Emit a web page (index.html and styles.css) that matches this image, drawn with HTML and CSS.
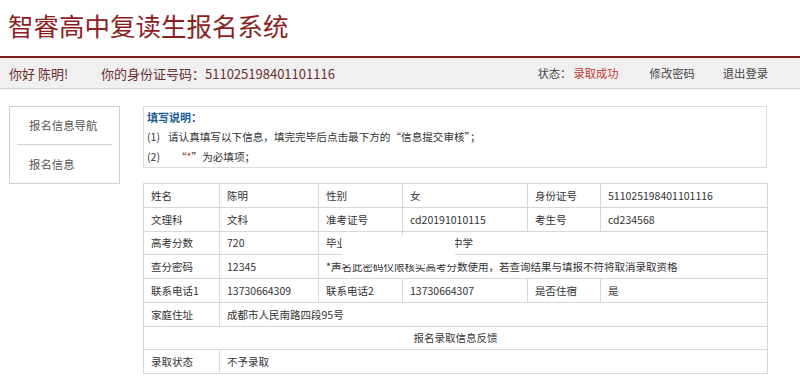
FILE: index.html
```html
<!DOCTYPE html>
<html lang="zh-CN">
<head>
<meta charset="utf-8">
<title>智睿高中复读生报名系统</title>
<link rel="stylesheet" href="styles.css">
</head>
<body>
<header class="title">智睿高中复读生报名系统</header>
<div class="topbar">
  <div class="tb-left">
    <span class="hello">你好 陈明!</span>
    <span class="idno">你的身份证号码：511025198401101116</span>
  </div>
  <div class="tb-right">
    <span class="status">状态：<em>录取成功</em></span>
    <a class="tb-link pwd">修改密码</a>
    <a class="tb-link">退出登录</a>
  </div>
</div>
<div class="main">
  <nav class="side">
    <div class="side-item first">报名信息导航</div>
    <div class="side-item">报名信息</div>
  </nav>
  <section class="content">
    <div class="notice">
      <div class="notice-title">填写说明：</div>
      <div class="notice-line"><span class="num">(1)</span>请认真填写以下信息，填完完毕后点击最下方的“信息提交审核”；</div>
      <div class="notice-line"><span class="num wide">(2)</span>“<span class="req">*</span>”为必填项；</div>
    </div>
    <div class="table-wrap">
      <table class="info">
        <colgroup>
          <col class="c1"><col class="c2"><col class="c3"><col class="c4"><col class="c5"><col class="c6">
        </colgroup>
        <tr><td>姓名</td><td>陈明</td><td>性别</td><td>女</td><td>身份证号</td><td>511025198401101116</td></tr>
        <tr><td>文理科</td><td>文科</td><td>准考证号</td><td>cd20191010115</td><td>考生号</td><td>cd234568</td></tr>
        <tr><td>高考分数</td><td>720</td><td>毕业学校</td><td colspan="3">成都七中中学</td></tr>
        <tr><td>查分密码</td><td>12345</td><td colspan="4">*声名此密码仅限核实高考分数使用，若查询结果与填报不符将取消录取资格</td></tr>
        <tr><td>联系电话1</td><td>13730664309</td><td>联系电话2</td><td>13730664307</td><td>是否住宿</td><td>是</td></tr>
        <tr><td>家庭住址</td><td colspan="5">成都市人民南路四段95号</td></tr>
        <tr><td colspan="6" class="center">报名录取信息反馈</td></tr>
        <tr><td>录取状态</td><td colspan="5">不予录取</td></tr>
      </table>
      <div class="mask"></div>
    </div>
  </section>
</div>
</body>
</html>
```

FILE: styles.css
```css
html, body {
  margin: 0;
  padding: 0;
  background: #fff;
}
body {
  font-family: "Noto Sans CJK SC", "Noto Sans", sans-serif;
  color: #333;
}
.title {
  height: 46px;
  padding: 10px 0 0 8px;
  font-size: 25.5px;
  line-height: 30px;
  color: #8b1f1f;
}
.topbar {
  border-top: 2px solid #7c1f1f;
  border-bottom: 1px solid #cfcfcf;
  background: #f0f0f0;
  height: 30px;
  display: flex;
  justify-content: space-between;
  align-items: center;
  padding: 0 32px 0 9px;
}
.tb-left {
  display: flex;
  align-items: center;
  font-size: 13px;
  color: #6a2f2f;
}
.hello {
  width: 92px;
}
.tb-right {
  display: flex;
  align-items: center;
  font-size: 11.3px;
  color: #444;
}
.status em {
  font-style: normal;
  color: #c0392b;
  margin-left: 2px;
}
.tb-link {
  margin-left: 28px;
}
.tb-link.pwd {
  margin-left: 31px;
}
.main {
  display: flex;
  align-items: flex-start;
  gap: 23px;
  padding: 17px 33px 0 9px;
}
.side {
  width: 109px;
  flex: none;
  border: 1px solid #cfcfcf;
  font-size: 11.4px;
  color: #555;
}
.side-item {
  margin: 0 7px;
  padding-left: 12px;
  line-height: 38px;
}
.side-item.first {
  line-height: 37px;
  border-bottom: 1px solid #d4d4d4;
}
.content {
  flex: 1;
  min-width: 0;
}
.notice {
  border: 1px solid #dcdcdc;
  padding-left: 3px;
  font-size: 10.6px;
  line-height: 20px;
}
.notice-title {
  font-weight: bold;
  font-size: 11px;
  color: #1d5d96;
}
.num {
  display: inline-block;
  width: 21px;
}
.num.wide {
  width: 29px;
}
.req {
  color: #d33;
}
.table-wrap {
  position: relative;
  margin-top: 15px;
}
.info {
  width: 100%;
  border-collapse: collapse;
  table-layout: fixed;
  font-size: 10.5px;
}
.c1 { width: 76px; }
.c2 { width: 99px; }
.c3 { width: 84px; }
.c4 { width: 125px; }
.c5 { width: 73px; }
.c6 { width: 167px; }
.info td {
  border: 1px solid #d8d8d8;
  height: 22.75px;
  padding: 0 0 0 7px;
  white-space: nowrap;
  overflow: hidden;
}
.info td.center {
  text-align: center;
  padding: 0;
}
.mask {
  position: absolute;
  left: 199px;
  top: 52px;
  width: 113px;
  height: 29px;
  background: #fff;
}
```
